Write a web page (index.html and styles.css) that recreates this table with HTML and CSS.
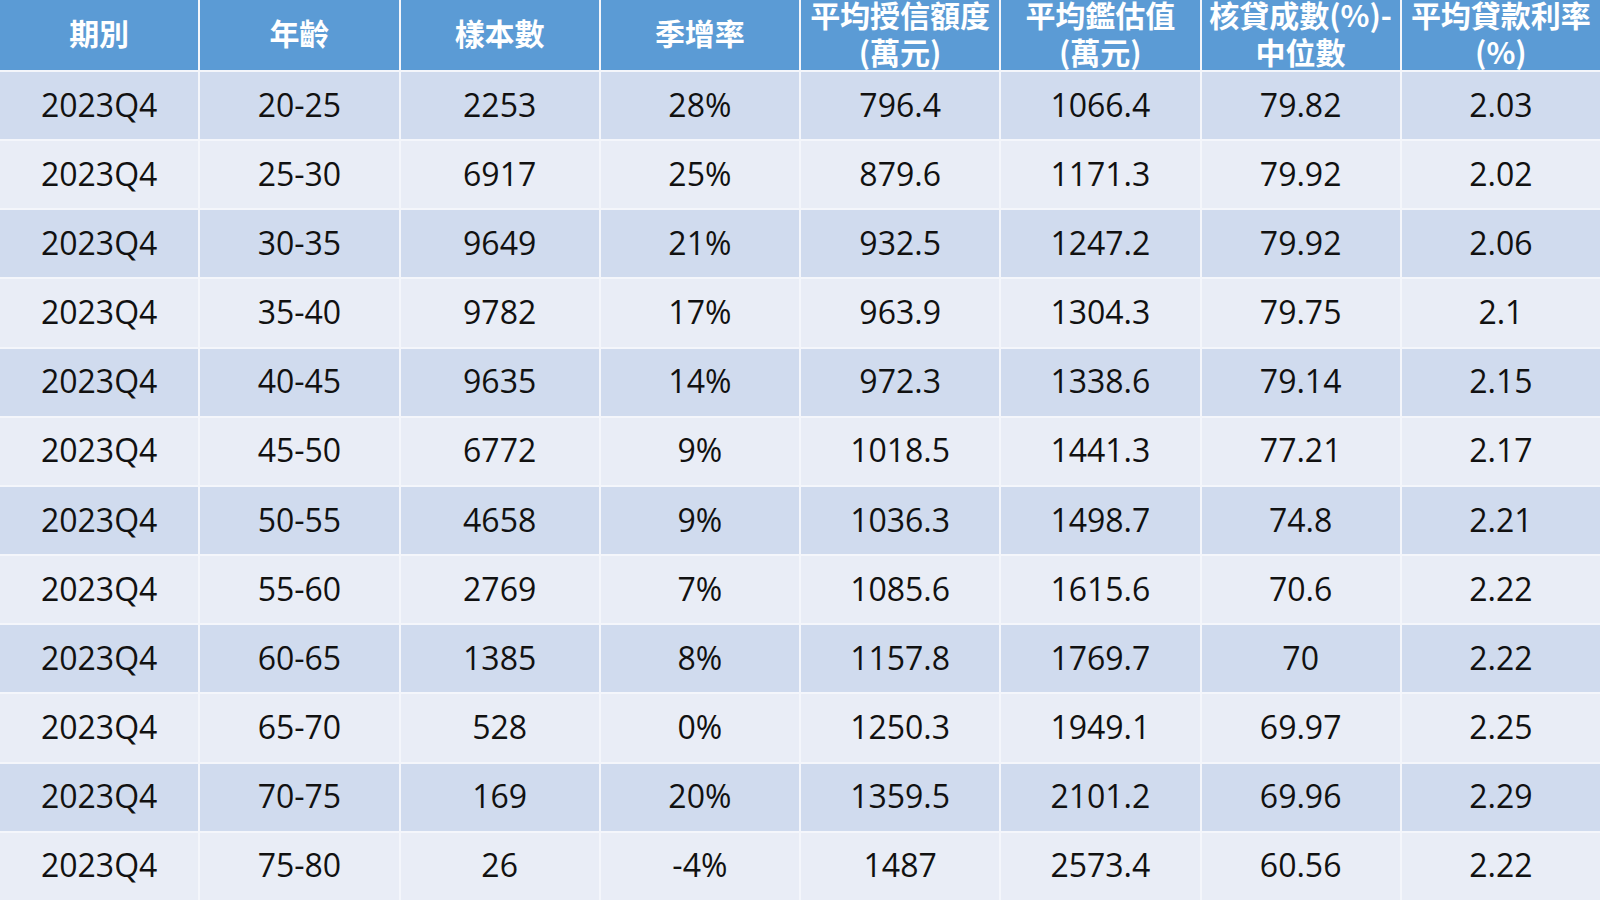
FILE: index.html
```html
<!DOCTYPE html>
<html lang="zh-Hant">
<head>
<meta charset="utf-8">
<title>2023Q4 年齡別房貸統計</title>
<link rel="stylesheet" href="styles.css">
</head>
<body>
<div class="table">
  <div class="row head">
    <div class="cell">期別</div>
    <div class="cell">年齡</div>
    <div class="cell">樣本數</div>
    <div class="cell">季增率</div>
    <div class="cell">平均授信額度<br>(萬元)</div>
    <div class="cell">平均鑑估值<br>(萬元)</div>
    <div class="cell">核貸成數(%)-<br>中位數</div>
    <div class="cell">平均貸款利率<br>(%)</div>
  </div>
  <div class="row odd"><div class="cell">2023Q4</div><div class="cell">20-25</div><div class="cell">2253</div><div class="cell">28%</div><div class="cell">796.4</div><div class="cell">1066.4</div><div class="cell">79.82</div><div class="cell">2.03</div></div>
  <div class="row even"><div class="cell">2023Q4</div><div class="cell">25-30</div><div class="cell">6917</div><div class="cell">25%</div><div class="cell">879.6</div><div class="cell">1171.3</div><div class="cell">79.92</div><div class="cell">2.02</div></div>
  <div class="row odd"><div class="cell">2023Q4</div><div class="cell">30-35</div><div class="cell">9649</div><div class="cell">21%</div><div class="cell">932.5</div><div class="cell">1247.2</div><div class="cell">79.92</div><div class="cell">2.06</div></div>
  <div class="row even"><div class="cell">2023Q4</div><div class="cell">35-40</div><div class="cell">9782</div><div class="cell">17%</div><div class="cell">963.9</div><div class="cell">1304.3</div><div class="cell">79.75</div><div class="cell">2.1</div></div>
  <div class="row odd"><div class="cell">2023Q4</div><div class="cell">40-45</div><div class="cell">9635</div><div class="cell">14%</div><div class="cell">972.3</div><div class="cell">1338.6</div><div class="cell">79.14</div><div class="cell">2.15</div></div>
  <div class="row even"><div class="cell">2023Q4</div><div class="cell">45-50</div><div class="cell">6772</div><div class="cell">9%</div><div class="cell">1018.5</div><div class="cell">1441.3</div><div class="cell">77.21</div><div class="cell">2.17</div></div>
  <div class="row odd"><div class="cell">2023Q4</div><div class="cell">50-55</div><div class="cell">4658</div><div class="cell">9%</div><div class="cell">1036.3</div><div class="cell">1498.7</div><div class="cell">74.8</div><div class="cell">2.21</div></div>
  <div class="row even"><div class="cell">2023Q4</div><div class="cell">55-60</div><div class="cell">2769</div><div class="cell">7%</div><div class="cell">1085.6</div><div class="cell">1615.6</div><div class="cell">70.6</div><div class="cell">2.22</div></div>
  <div class="row odd"><div class="cell">2023Q4</div><div class="cell">60-65</div><div class="cell">1385</div><div class="cell">8%</div><div class="cell">1157.8</div><div class="cell">1769.7</div><div class="cell">70</div><div class="cell">2.22</div></div>
  <div class="row even"><div class="cell">2023Q4</div><div class="cell">65-70</div><div class="cell">528</div><div class="cell">0%</div><div class="cell">1250.3</div><div class="cell">1949.1</div><div class="cell">69.97</div><div class="cell">2.25</div></div>
  <div class="row odd"><div class="cell">2023Q4</div><div class="cell">70-75</div><div class="cell">169</div><div class="cell">20%</div><div class="cell">1359.5</div><div class="cell">2101.2</div><div class="cell">69.96</div><div class="cell">2.29</div></div>
  <div class="row even"><div class="cell">2023Q4</div><div class="cell">75-80</div><div class="cell">26</div><div class="cell">-4%</div><div class="cell">1487</div><div class="cell">2573.4</div><div class="cell">60.56</div><div class="cell">2.22</div></div>
</div>
</body>
</html>
```

FILE: styles.css
```css
html, body {
  margin: 0;
  padding: 0;
  background: #eef1f8;
}
body {
  width: 1600px;
  height: 900px;
  overflow: hidden;
  font-family: "Open Sans", "Noto Sans CJK TC", sans-serif;
}
.table {
  display: grid;
  grid-template-rows: 70px repeat(12, 1fr);
  row-gap: 2px;
  height: 900px;
  background: #f4f6fb;
}
.row {
  display: grid;
  grid-template-columns: repeat(8, 1fr);
  column-gap: 2px;
}
.cell {
  display: flex;
  align-items: center;
  justify-content: center;
  text-align: center;
  color: #111;
  font-size: 32px;
  line-height: 1;
  padding-bottom: 2px;
}
.head .cell {
  background: #5b9bd5;
  color: #fff;
  font-family: "Noto Sans CJK TC", "Open Sans", sans-serif;
  font-size: 30px;
  font-weight: 700;
  line-height: 37px;
  padding-bottom: 5px;
  overflow: hidden;
}
.odd .cell {
  background: #d0dbee;
}
.even .cell {
  background: #e9edf6;
}
```
